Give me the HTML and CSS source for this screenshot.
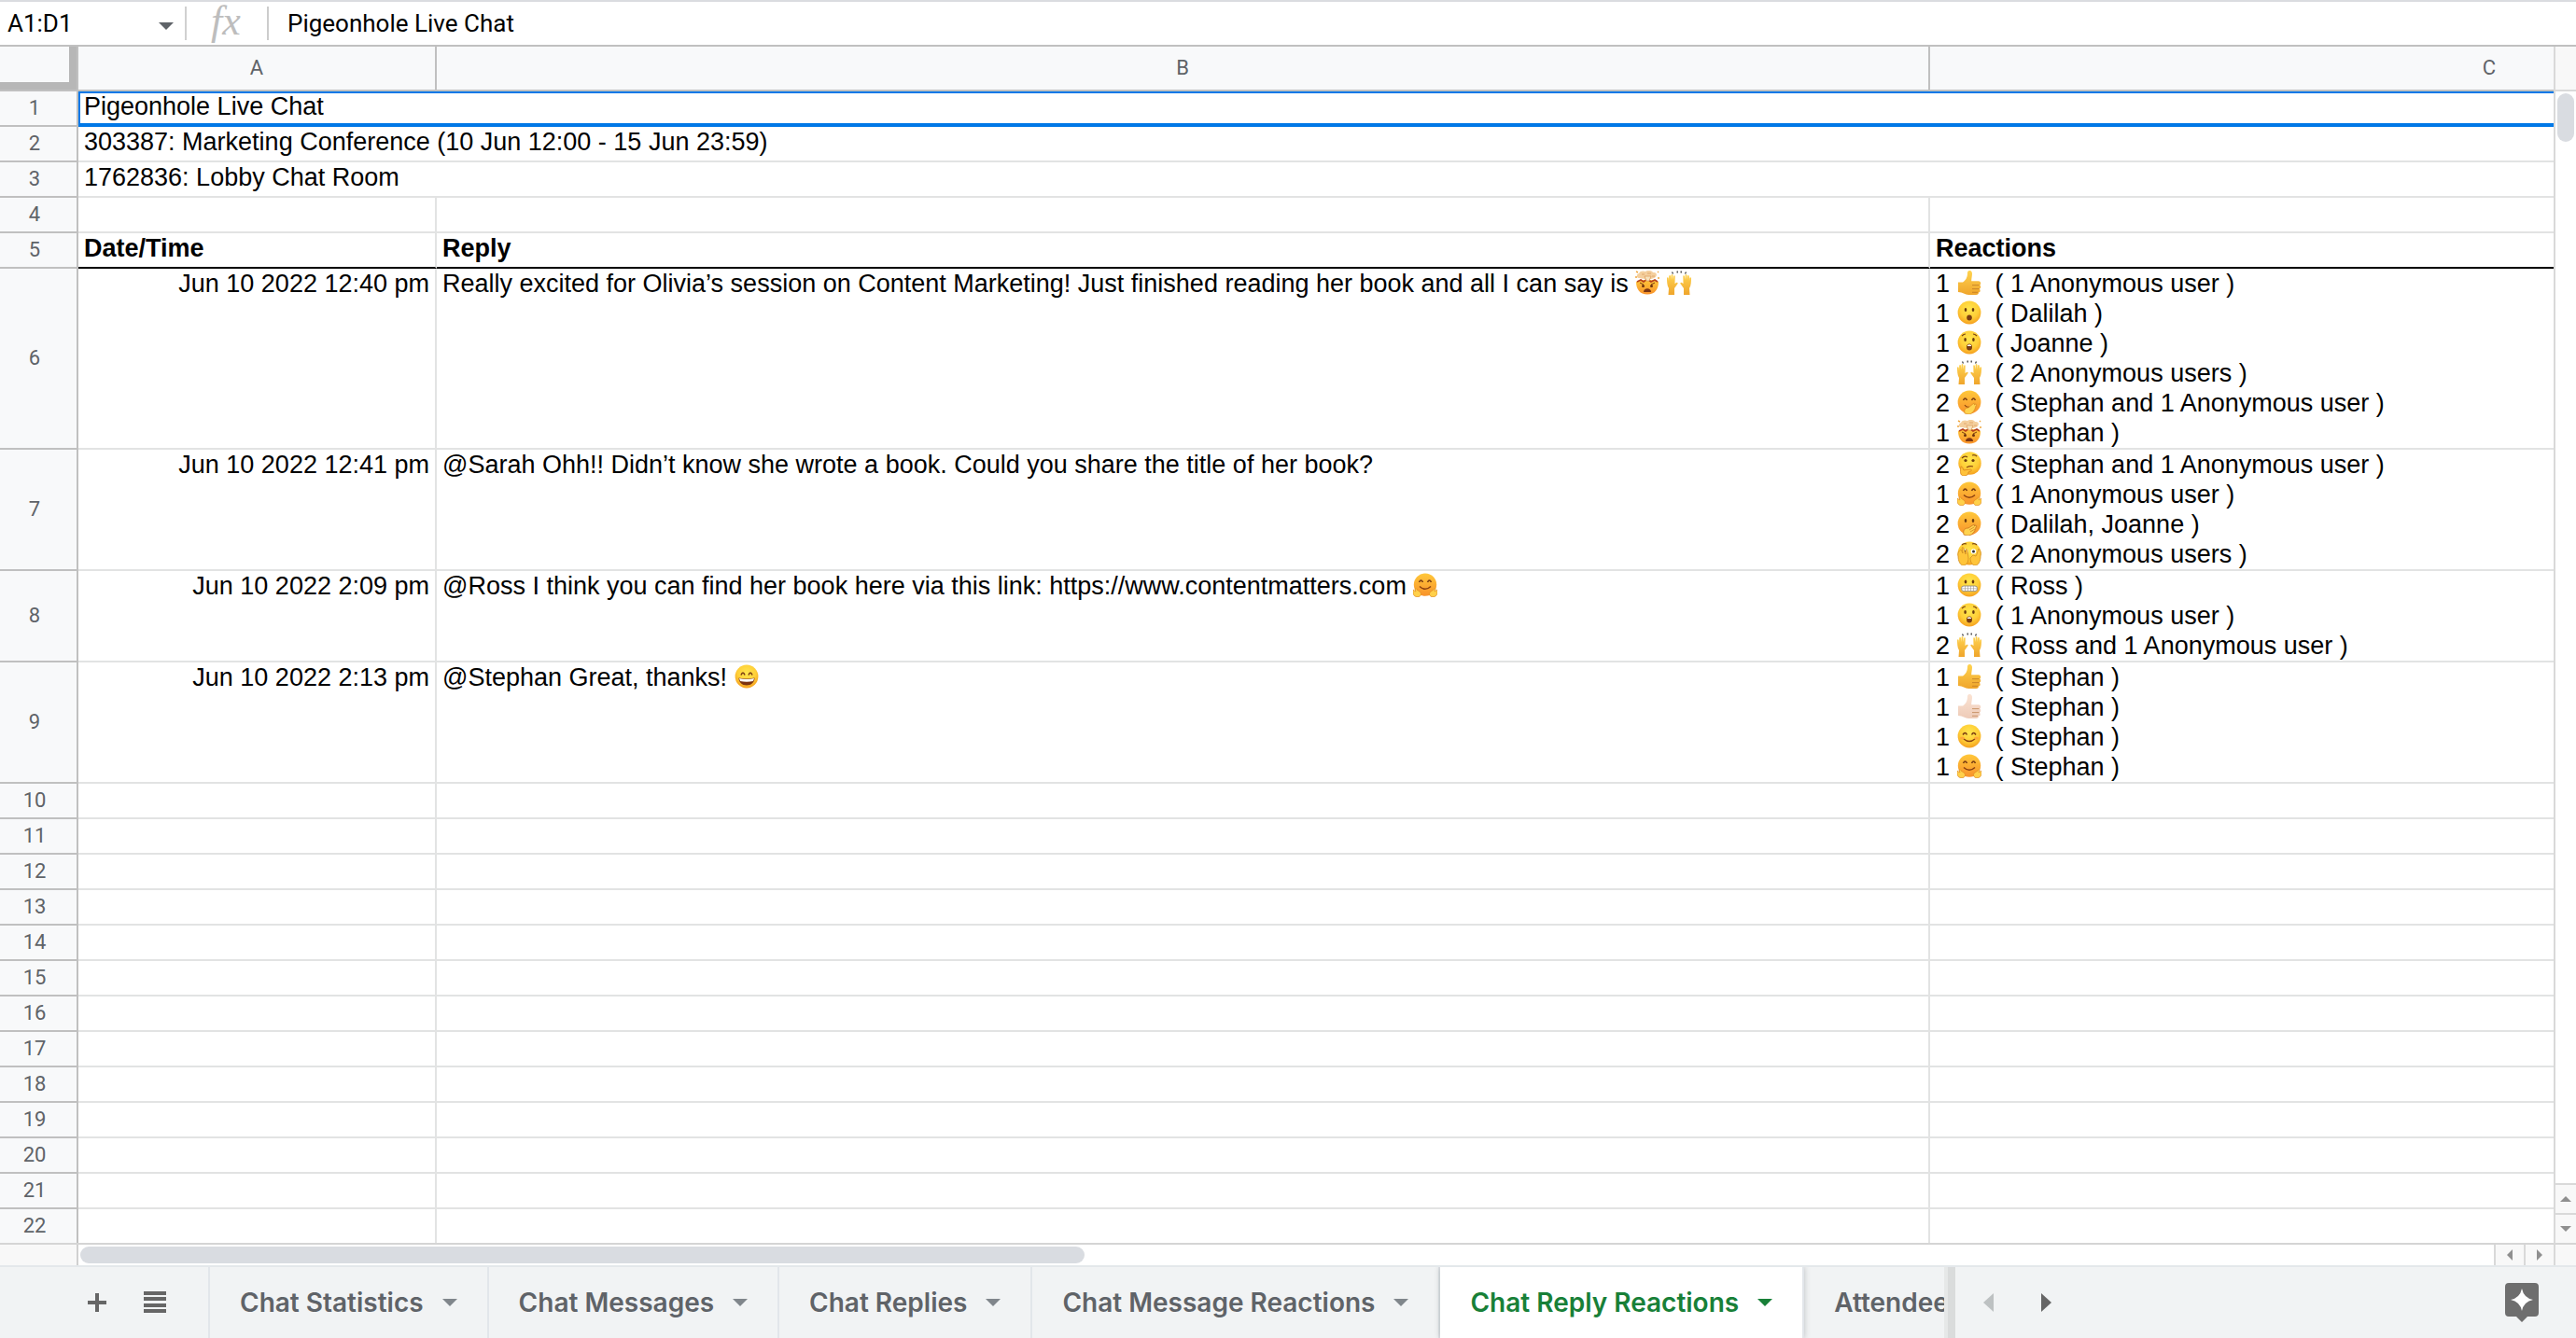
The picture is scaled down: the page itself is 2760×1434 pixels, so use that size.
FILE: index.html
```html
<!DOCTYPE html>
<html lang="en">
<head>
<meta charset="utf-8">
<title>Pigeonhole Live Chat</title>
<link rel="stylesheet" href="styles.css">
</head>
<body>
<svg class="defs" aria-hidden="true">
  <defs>
    <radialGradient id="skin" cx="50%" cy="35%" r="65%">
      <stop offset="0" stop-color="#ffe64d"/><stop offset="0.6" stop-color="#ffcf38"/><stop offset="1" stop-color="#f5a01f"/>
    </radialGradient>
    <linearGradient id="warm" x1="0" y1="0" x2="0" y2="1">
      <stop offset="0" stop-color="#ffc83a"/><stop offset="1" stop-color="#f8922b"/>
    </linearGradient>
    <linearGradient id="hand" x1="0" y1="0" x2="0" y2="1">
      <stop offset="0" stop-color="#ffd34f"/><stop offset="1" stop-color="#efa52c"/>
    </linearGradient>
    <linearGradient id="pale" x1="0" y1="0" x2="0" y2="1">
      <stop offset="0" stop-color="#fbe3d3"/><stop offset="1" stop-color="#eecbb8"/>
    </linearGradient>
    <path id="fist" d="M1 12.500h5c3-2 5-5 5-10 0-3.500 5-3.500 5 .8 0 3-.8 5-.8 8h7.600c3 0 3 4 1 4.200 2 .6 1.800 3.800 0 4.200 1.400 1 1 3.600-1 3.800.4 1.600-.8 2.500-2.600 2.500h-8c-4 0-6-3-11.200-3z"/>
    <path id="fingers" d="M16 15.600h7.500M16 19.600h7.500M16 23.300h6" fill="none" stroke="#a8601f" stroke-opacity=".6" stroke-width=".9"/>
    <symbol id="thumb" viewBox="0 0 26 26"><use href="#fist" fill="url(#hand)"/><use href="#fingers"/></symbol>
    <symbol id="thumb-light" viewBox="0 0 26 26"><use href="#fist" fill="url(#pale)"/><use href="#fingers"/></symbol>
    <symbol id="open-mouth" viewBox="0 0 26 26">
      <circle cx="13" cy="13" r="12.400" fill="url(#skin)"/>
      <ellipse cx="9" cy="10" rx="1.300" ry="2" fill="#6b3b10"/><ellipse cx="17" cy="10" rx="1.300" ry="2" fill="#6b3b10"/>
      <ellipse cx="13" cy="18.500" rx="2.800" ry="3" fill="#7a3d12"/>
    </symbol>
    <symbol id="astonished" viewBox="0 0 26 26">
      <circle cx="13" cy="13" r="12.400" fill="url(#skin)"/>
      <path d="M5 6q2-2 4-2M17 4q2 0 4 2" fill="none" stroke="#7a4512" stroke-width="1.200"/>
      <ellipse cx="8.600" cy="10" rx="1.300" ry="2" fill="#6b3b10"/><ellipse cx="17.400" cy="10" rx="1.300" ry="2" fill="#6b3b10"/>
      <ellipse cx="13" cy="18" rx="3" ry="3.600" fill="#7a3d12"/><path d="M11 16q2-1.400 4 0v1h-4z" fill="#fff"/>
    </symbol>
    <symbol id="hands" viewBox="0 0 26 26">
      <path d="M5.500 1.500l1 2M11 .5l.4 2M15 2.500l.4-2M19.500 3.500l1-2" stroke="#444" stroke-width="1.300"/>
      <path id="left-hand" d="M1.500 26l.5-7C0 16 0 11 0 8c0-1 1.500-1 1.700 0l.3 3 .2-5c0-1.200 1.800-1.200 1.800 0l.2 4 .4-5c0-1.200 1.800-1.200 1.800 0v5l.7-4c.3-1 1.700-.8 1.600.3L8.500 14l1.500-1c1.500-.8 2.200.5 1.200 1.500L8 19v7z" fill="url(#hand)"/>
      <use href="#left-hand" transform="translate(26 0) scale(-1 1)"/>
    </symbol>
    <symbol id="giggle" viewBox="0 0 26 26">
      <circle cx="13" cy="13" r="12.400" fill="url(#warm)"/>
      <path d="M6.500 11q2-4 4 0M15.500 11q2-4 4 0" fill="none" stroke="#7a3d12" stroke-width="1.500"/>
      <path d="M8 16q2 3 5 2" fill="none" stroke="#8a4512" stroke-width="1.200"/>
      <path d="M8 25c-1-4 1-6 4-6l6-5c1 0 1 1 0 2l2-1c1 0 1 2 0 2-1 5-4 9-8 9z" fill="#ffd34f" stroke="#d98520" stroke-width=".7"/>
    </symbol>
    <symbol id="mind-blown" viewBox="0 0 26 26">
      <path d="M1 12c7-3 17-3 24 0 0 8-4 13.600-12 13.600S1 20 1 12z" fill="url(#warm)"/>
      <path d="M2 12l4-2 3 2 4-3 4 3 4-2 3 2" fill="none" stroke="#b8401c" stroke-width="1.600"/>
      <path d="M5 8c-4 0-4-4-1-5 1-3 5-3 7-2 3-2 7-1 8 1 5-1 5 5 1 6-4 2-11 1-15 0z" fill="#f4cf9d"/>
      <path d="M10 6l2 5h3l2-5zM7 4h3M13 3h4M18 6h3" fill="#f8e3bd" stroke="#dd9e60" stroke-width=".8"/>
      <path d="M1 1l2 1M24 1l1 1M0 7h2M24 8h2" stroke="#f0a63c" stroke-width="1.400"/>
      <path d="M5 13l4 2M21 13l-4 2" stroke="#7a3d12" stroke-width="1"/>
      <circle cx="8.500" cy="16.500" r="1.500" fill="#6b300e"/><circle cx="17.500" cy="16.500" r="1.500" fill="#6b300e"/>
      <path d="M9 23c0-5 8-5 8 0z" fill="#7a3512"/>
    </symbol>
    <symbol id="thinking" viewBox="0 0 26 26">
      <circle cx="13.500" cy="12.500" r="12.200" fill="url(#skin)"/>
      <path d="M5 7q3-3 6-1M16 4q3-1 5 1" fill="none" stroke="#7a4512" stroke-width="1.300"/>
      <circle cx="9" cy="9.500" r="1.600" fill="#6b3b10"/><circle cx="17" cy="9.500" r="1.600" fill="#6b3b10"/>
      <path d="M10 17q4-2 7-1" fill="none" stroke="#8a4512" stroke-width="1.200"/>
      <path d="M4 16c2 0 2 3 3 4l7-1c2 0 2 2 0 2l-2 1c0 3-2 4-5 4-4 0-4-5-3-10z" fill="#ffc23a" stroke="#d98520" stroke-width=".8"/>
    </symbol>
    <symbol id="hug" viewBox="0 0 26 26">
      <circle cx="13" cy="12.600" r="12.200" fill="url(#warm)"/>
      <path d="M6.500 10q2-4 4 0M15.500 10q2-4 4 0" fill="none" stroke="#7a3d12" stroke-width="1.600"/>
      <path d="M7 14.500q6 5.500 12 0" fill="none" stroke="#8a4010" stroke-width="1.500"/>
      <path id="hug-hand" d="M0 18l3 2-1-3c1-1 2 0 2 1l3 2c3 2 1 6-2 5.700-3 0-4-1-5-3.700z" fill="#ffd04a" stroke="#e08a22" stroke-width=".7"/>
      <use href="#hug-hand" transform="translate(26 0) scale(-1 1)"/>
    </symbol>
    <symbol id="hand-over-mouth" viewBox="0 0 26 26">
      <circle cx="13" cy="13" r="12.400" fill="url(#warm)"/>
      <ellipse cx="9" cy="10" rx="1.300" ry="2" fill="#6b3b10"/><ellipse cx="17" cy="10" rx="1.300" ry="2" fill="#6b3b10"/>
      <path d="M7 25c-1-5 1-7 5-7l6-4c1 0 1 1 0 2l2-1c1 0 1 2 0 2-1 5-4 9-9 9z" fill="#ffd34f" stroke="#c97520" stroke-width=".8"/>
      <path d="M13 20l5-3M14 22l5-3" stroke="#c97520" stroke-width=".7"/>
    </symbol>
    <symbol id="peeking" viewBox="0 0 26 26">
      <circle cx="13" cy="13" r="12.400" fill="url(#skin)"/>
      <path d="M5 4q2-2 5-1M16 3q3-1 5 1" fill="none" stroke="#7a4512" stroke-width="1.200"/>
      <circle cx="9" cy="11" r="2.800" fill="#fff"/><circle cx="17.500" cy="11" r="2.800" fill="#fff"/>
      <circle cx="9" cy="11" r="1.200" fill="#333"/><circle cx="17.500" cy="11" r="1.500" fill="#333"/>
      <path d="M1 16c-1-3 1-6 3-7l2 4-1-6c1-1 2 0 2 1l2 6V9c1-1 2 0 2 1l1 8c0 4-2 8-5 8-4 0-6-5-6-10z" fill="#ffc53a" stroke="#d08c22" stroke-width=".8"/>
      <path d="M25 16c1-3 0-6-2-8l-2 6-1 2-3-1-3 3c0 4 2 8 5 8 4 0 6-5 6-10z" fill="#ffc53a" stroke="#d08c22" stroke-width=".8"/>
    </symbol>
    <symbol id="grimace" viewBox="0 0 26 26">
      <circle cx="13" cy="13" r="12.400" fill="url(#skin)"/>
      <ellipse cx="9" cy="9.500" rx="1.300" ry="2" fill="#6b3b10"/><ellipse cx="17" cy="9.500" rx="1.300" ry="2" fill="#6b3b10"/>
      <rect x="4.500" y="14" width="17" height="5.600" rx="2.600" fill="#fff" stroke="#8f8a80" stroke-width=".9"/>
      <path d="M5 16.800h16M8.500 14v5.600M11.500 14v5.600M14.500 14v5.600M17.500 14v5.600" stroke="#9a968e" stroke-width=".6"/>
    </symbol>
    <symbol id="smile" viewBox="0 0 26 26">
      <circle cx="13" cy="13" r="12.400" fill="url(#skin)"/>
      <path d="M6 11.500q2.500-4 4.500 0M15.500 11.500q2-4 4.500 0" fill="none" stroke="#7a3d12" stroke-width="1.500"/>
      <path d="M7 16q6 5 12 0" fill="none" stroke="#8a4010" stroke-width="1.500"/>
      <ellipse cx="5.500" cy="15" rx="2.400" ry="1.600" fill="#ff8f3a" opacity=".6"/><ellipse cx="20.500" cy="15" rx="2.400" ry="1.600" fill="#ff8f3a" opacity=".6"/>
    </symbol>
    <symbol id="grin" viewBox="0 0 26 26">
      <circle cx="13" cy="13" r="12.400" fill="url(#skin)"/>
      <path d="M7 11.500q2-5 4 0M15 11.500q2-5 4 0" fill="none" stroke="#7a3d12" stroke-width="1.600"/>
      <path d="M4.500 14.500q8.500 2 17 0c0 4.500-3.500 8-8.500 8s-8.500-3.500-8.500-8z" fill="#7c3210"/><path d="M5 15q8 2 16 0l-1 3q-7 1.500-14 0z" fill="#fff"/>
    </symbol>
  </defs>
</svg>

<header class="formula-bar">
  <div class="name-box">
    <input class="name-input" type="text" value="A1:D1" aria-label="Name box">
    <button class="name-menu" type="button" aria-label="Named ranges"><span class="caret"></span></button>
  </div>
  <span class="fx" aria-hidden="true">fx</span>
  <input class="formula-input" type="text" value="Pigeonhole Live Chat" aria-label="Formula">
</header>

<main class="workspace">
  <div class="viewport">
    <table class="sheet">
      <colgroup><col class="col-num"><col class="col-a"><col class="col-b"><col class="col-c"></colgroup>
      <thead>
        <tr><th class="corner"></th><th scope="col">A</th><th scope="col">B</th><th scope="col">C</th></tr>
      </thead>
      <tbody>
        <tr><th scope="row">1</th><td class="selected" colspan="3">Pigeonhole Live Chat</td></tr>
        <tr><th scope="row">2</th><td colspan="3">303387: Marketing Conference (10 Jun 12:00 - 15 Jun 23:59)</td></tr>
        <tr><th scope="row">3</th><td colspan="3">1762836: Lobby Chat Room</td></tr>
        <tr><th scope="row">4</th><td></td><td></td><td></td></tr>
        <tr class="titles"><th scope="row">5</th><td>Date/Time</td><td>Reply</td><td>Reactions</td></tr>
        <tr>
          <th scope="row">6</th>
          <td class="date">Jun 10 2022 12:40 pm</td>
          <td>Really excited for Olivia’s session on Content Marketing! Just finished reading her book and all I can say is <svg class="emoji" role="img" aria-label="mind blown"><use href="#mind-blown"/></svg> <svg class="emoji" role="img" aria-label="raised hands"><use href="#hands"/></svg></td>
          <td>
            <ul class="reactions">
              <li>1 <svg class="emoji"><use href="#thumb"/></svg>  ( 1 Anonymous user )</li>
              <li>1 <svg class="emoji"><use href="#open-mouth"/></svg>  ( Dalilah )</li>
              <li>1 <svg class="emoji"><use href="#astonished"/></svg>  ( Joanne )</li>
              <li>2 <svg class="emoji"><use href="#hands"/></svg>  ( 2 Anonymous users )</li>
              <li>2 <svg class="emoji"><use href="#giggle"/></svg>  ( Stephan and 1 Anonymous user )</li>
              <li>1 <svg class="emoji"><use href="#mind-blown"/></svg>  ( Stephan )</li>
            </ul>
          </td>
        </tr>
        <tr>
          <th scope="row">7</th>
          <td class="date">Jun 10 2022 12:41 pm</td>
          <td>@Sarah Ohh!! Didn’t know she wrote a book. Could you share the title of her book?</td>
          <td>
            <ul class="reactions">
              <li>2 <svg class="emoji"><use href="#thinking"/></svg>  ( Stephan and 1 Anonymous user )</li>
              <li>1 <svg class="emoji"><use href="#hug"/></svg>  ( 1 Anonymous user )</li>
              <li>2 <svg class="emoji"><use href="#hand-over-mouth"/></svg>  ( Dalilah, Joanne )</li>
              <li>2 <svg class="emoji"><use href="#peeking"/></svg>  ( 2 Anonymous users )</li>
            </ul>
          </td>
        </tr>
        <tr>
          <th scope="row">8</th>
          <td class="date">Jun 10 2022 2:09 pm</td>
          <td>@Ross I think you can find her book here via this link: https://www.contentmatters.com <svg class="emoji" role="img" aria-label="hug"><use href="#hug"/></svg></td>
          <td>
            <ul class="reactions">
              <li>1 <svg class="emoji"><use href="#grimace"/></svg>  ( Ross )</li>
              <li>1 <svg class="emoji"><use href="#astonished"/></svg>  ( 1 Anonymous user )</li>
              <li>2 <svg class="emoji"><use href="#hands"/></svg>  ( Ross and 1 Anonymous user )</li>
            </ul>
          </td>
        </tr>
        <tr>
          <th scope="row">9</th>
          <td class="date">Jun 10 2022 2:13 pm</td>
          <td>@Stephan Great, thanks! <svg class="emoji" role="img" aria-label="grin"><use href="#grin"/></svg></td>
          <td>
            <ul class="reactions">
              <li>1 <svg class="emoji"><use href="#thumb"/></svg>  ( Stephan )</li>
              <li>1 <svg class="emoji"><use href="#thumb-light"/></svg>  ( Stephan )</li>
              <li>1 <svg class="emoji"><use href="#smile"/></svg>  ( Stephan )</li>
              <li>1 <svg class="emoji"><use href="#hug"/></svg>  ( Stephan )</li>
            </ul>
          </td>
        </tr>
        <tr><th scope="row">10</th><td></td><td></td><td></td></tr>
        <tr><th scope="row">11</th><td></td><td></td><td></td></tr>
        <tr><th scope="row">12</th><td></td><td></td><td></td></tr>
        <tr><th scope="row">13</th><td></td><td></td><td></td></tr>
        <tr><th scope="row">14</th><td></td><td></td><td></td></tr>
        <tr><th scope="row">15</th><td></td><td></td><td></td></tr>
        <tr><th scope="row">16</th><td></td><td></td><td></td></tr>
        <tr><th scope="row">17</th><td></td><td></td><td></td></tr>
        <tr><th scope="row">18</th><td></td><td></td><td></td></tr>
        <tr><th scope="row">19</th><td></td><td></td><td></td></tr>
        <tr><th scope="row">20</th><td></td><td></td><td></td></tr>
        <tr><th scope="row">21</th><td></td><td></td><td></td></tr>
        <tr><th scope="row">22</th><td></td><td></td><td></td></tr>
      </tbody>
    </table>
  </div>
  <div class="v-scroll">
    <div class="v-cap"></div>
    <div class="v-track"><div class="v-thumb"></div></div>
    <button type="button" aria-label="Scroll up"><span class="tri up"></span></button>
    <button type="button" aria-label="Scroll down"><span class="tri down"></span></button>
  </div>
  <div class="h-scroll">
    <div class="h-cap"></div>
    <div class="h-track"><div class="h-thumb"></div></div>
    <button type="button" aria-label="Scroll left"><span class="tri left"></span></button>
    <button type="button" aria-label="Scroll right"><span class="tri right"></span></button>
  </div>
  <div class="scroll-corner"></div>
</main>

<footer class="tab-bar">
  <div class="tools">
    <button type="button" aria-label="Add sheet"><svg width="24" height="24" viewBox="0 0 24 24"><path d="M12 2v20M2 12h20" stroke="#666" stroke-width="4"/></svg></button>
    <button type="button" aria-label="All sheets"><svg width="24" height="24" viewBox="0 0 24 24"><path d="M0 2h24M0 8h24M0 15h24M0 21h24" stroke="#666" stroke-width="4"/></svg></button>
  </div>
  <nav class="tabs" aria-label="Sheets">
    <button class="tab" type="button">Chat Statistics<span class="caret"></span></button>
    <button class="tab" type="button">Chat Messages<span class="caret"></span></button>
    <button class="tab" type="button">Chat Replies<span class="caret"></span></button>
    <button class="tab" type="button">Chat Message Reactions<span class="caret"></span></button>
    <button class="tab active" type="button" aria-current="page">Chat Reply Reactions<span class="caret"></span></button>
    <button class="tab" type="button">Attendees<span class="caret"></span></button>
  </nav>
  <div class="tab-side">
    <button type="button" aria-label="Previous sheets" disabled><svg width="12" height="20" viewBox="0 0 12 20"><path d="M11 0v20L0 10z" fill="#bdc1c2"/></svg></button>
    <button type="button" aria-label="Next sheets"><svg width="12" height="20" viewBox="0 0 12 20"><path d="M0 0v20l11-10z" fill="#666"/></svg></button>
    <button class="explore" type="button" aria-label="Explore"><svg width="36" height="42" viewBox="0 0 36 42"><path d="M4 0h28a4 4 0 0 1 4 4v28a4 4 0 0 1-4 4h-8l-6 6-6-6H4a4 4 0 0 1-4-4V4a4 4 0 0 1 4-4z" fill="#6e6e6e"/><path d="M18 6q2 10 12 12-10 2-12 12-2-10-12-12 10-2 12-12z" fill="#fff"/></svg></button>
  </div>
</footer>
</body>
</html>
```
FILE: styles.css
```css
* { box-sizing: border-box; }

body {
  margin: 0;
  height: 100vh;
  display: flex;
  flex-direction: column;
  background: #fff;
  color: #000;
  font-family: "Liberation Sans", Arial, sans-serif;
  overflow: hidden;
}

button, input {
  margin: 0;
  padding: 0;
  border: 0;
  background: none;
  color: inherit;
  font: inherit;
}

button {
  display: flex;
  align-items: center;
  justify-content: center;
}

.defs { position: absolute; width: 0; height: 0; }

.caret {
  border: 8px solid transparent;
  border-top-color: currentColor;
  border-bottom: 0;
}

/* Formula bar */
.formula-bar {
  flex: none;
  display: flex;
  align-items: center;
  height: 50px;
  border-top: 2px solid #dadce0;
  border-bottom: 2px solid #c0c0c0;
  font: 26px/32px Roboto, sans-serif;
}

.name-box {
  display: flex;
  align-items: center;
  width: 200px;
  height: 36px;
  padding: 0 12px 0 8px;
  border-right: 2px solid #d0d0d0;
}

.name-input { flex: 1; min-width: 0; }
.name-menu { color: #5f6368; padding-top: 6px; }

.fx {
  width: 88px;
  height: 36px;
  padding-left: 26px;
  border-right: 2px solid #ccc;
  color: #bdbdbd;
  font: italic 44px/32px "Liberation Serif", serif;
}

.formula-input { flex: 1; padding-left: 20px; }

/* Grid */
.workspace {
  flex: 1;
  min-height: 0;
  display: grid;
  grid-template: 1fr 22px / 1fr 24px;
}

.viewport {
  overflow: hidden;
  border-bottom: 2px solid #d5d5d5;
}

.sheet {
  width: 3268px;
  table-layout: fixed;
  border-collapse: separate;
  border-spacing: 0;
  font-size: 27px;
  line-height: 32px;
}

.col-num { width: 84px; }
.col-a { width: 384px; }
.col-b { width: 1600px; }
.col-c { width: 1200px; }

.sheet th, .sheet td {
  height: 38px;
  border: solid #e2e3e3;
  border-width: 0 2px 2px 0;
}

.sheet td {
  padding: 0 6px;
  vertical-align: top;
  text-align: left;
}

.sheet th {
  padding: 0;
  border-color: #c0c0c0;
  background: #f8f9fa;
  color: #5f6368;
  font: 22px/24px Roboto, sans-serif;
  text-align: center;
}

.sheet thead th { height: 48px; }
.sheet tbody th { padding-right: 8px; }

.sheet .corner { box-shadow: inset -8px -8px 0 #b7b7b7; }

.sheet .selected {
  border-bottom-color: #0078e7;
  box-shadow: inset 2px 2px 0 #0078e7, inset 0 -2px 0 #0078e7;
}

.sheet .titles td {
  border-bottom-color: #000;
  font-weight: bold;
}

.sheet .date { text-align: right; }

.reactions {
  margin: 0;
  padding: 0;
  list-style: none;
}

.reactions li {
  height: 32px;
  white-space: pre;
}

.emoji {
  width: 26px;
  height: 26px;
  vertical-align: -3px;
}

/* Scrollbars */
.v-scroll, .h-scroll { display: flex; }

.v-scroll {
  flex-direction: column;
  border-left: 2px solid #d9d9d9;
  border-bottom: 2px solid #d5d5d5;
}

.v-cap {
  height: 48px;
  border-bottom: 2px solid #d9d9d9;
  background: #f8f8f8;
}

.v-track { flex: 1; padding: 2px; }
.v-thumb { height: 52px; border-radius: 9px; background: #d9dce1; }

.v-scroll button {
  height: 32px;
  border-top: 2px solid #d9d9d9;
  background: #f8f8f8;
}

.h-cap {
  width: 84px;
  border-right: 2px solid #d0d0d0;
  background: #f8f8f8;
}

.h-track { flex: 1; padding: 2px; }
.h-thumb { width: 1076px; height: 18px; border-radius: 9px; background: #d9dce1; }

.h-scroll button {
  width: 32px;
  border-left: 2px solid #d9d9d9;
  background: #f8f8f8;
}

.scroll-corner {
  border-left: 2px solid #d9d9d9;
  background: #f8f8f8;
}

.tri { border: 6px solid transparent; color: #8f8f8f; }
.tri.up { border-top: 0; border-bottom-color: currentColor; }
.tri.down { border-bottom: 0; border-top-color: currentColor; }
.tri.left { border-left: 0; border-right-color: currentColor; }
.tri.right { border-right: 0; border-left-color: currentColor; }

/* Sheet tabs */
.tab-bar {
  flex: none;
  display: flex;
  height: 78px;
  border-top: 2px solid #e4e8eb;
  background: #f1f3f4;
}

.tools {
  display: flex;
  gap: 38px;
  width: 225px;
  padding-left: 92px;
  border-right: 2px solid #e2e6ea;
}

.tabs {
  flex: 1;
  min-width: 0;
  display: flex;
  overflow: hidden;
}

.tab {
  flex: none;
  gap: 20px;
  padding: 0 32px;
  border-right: 2px solid #e2e6ea;
  color: #5f6368;
  font: 600 28px/36px Inter, sans-serif;
  white-space: nowrap;
}

.tab .caret { color: #80868b; }

.tab.active {
  background: #fff;
  color: #188038;
  box-shadow: 0 0 6px rgba(60, 64, 67, .3);
}

.tab.active .caret { color: #188038; }

.tab-side {
  display: flex;
  width: 673px;
  padding: 0 40px 0 30px;
  border-left: 8px solid #dadcdc;
  box-shadow: -4px 0 0 #e6e8e8;
  gap: 50px;
}

.explore { margin-left: auto; }
```
